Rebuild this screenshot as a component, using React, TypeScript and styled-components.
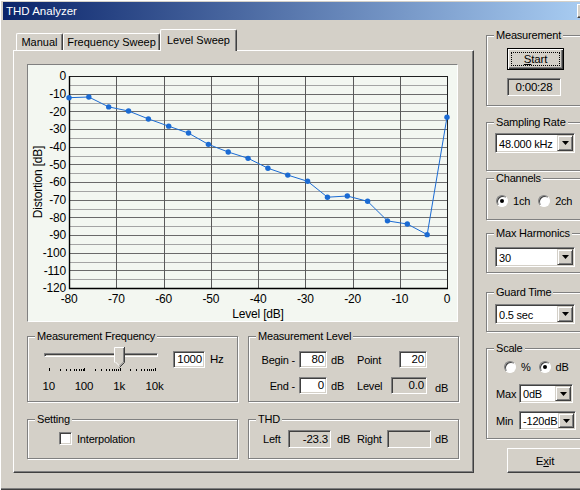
import React from "react";
import styled, { createGlobalStyle, css } from "styled-components";

interface SweepPoint {
    level: number;
    thd: number;
}

// measured sweep, -80 dB .. 0 dB in 20 steps
const sweep: SweepPoint[] = [
    { level: -80, thd: -12.3 },
    { level: -75.8, thd: -11.9 },
    { level: -71.6, thd: -17.5 },
    { level: -67.4, thd: -19.8 },
    { level: -63.2, thd: -24.3 },
    { level: -58.9, thd: -28.4 },
    { level: -54.7, thd: -32.3 },
    { level: -50.5, thd: -38.7 },
    { level: -46.3, thd: -43.0 },
    { level: -42.1, thd: -46.6 },
    { level: -37.9, thd: -52.2 },
    { level: -33.7, thd: -56.1 },
    { level: -29.5, thd: -59.6 },
    { level: -25.3, thd: -68.6 },
    { level: -21.1, thd: -67.9 },
    { level: -16.8, thd: -70.9 },
    { level: -12.6, thd: -82.0 },
    { level: -8.4, thd: -83.8 },
    { level: -4.2, thd: -89.8 },
    { level: 0, thd: -23.3 },
];

const CHART_W = 429;
const CHART_H = 256;
const PL = 41;
const PR = 419;
const PT = 11;
const PB = 223;

const xOf = (db: number) => PL + ((db + 80) * (PR - PL)) / 80;
const yOf = (db: number) => PT + (-db * (PB - PT)) / 120;

const LevelChart = () => {
    const hLines: number[] = [];
    for (let d = -5; d > -120; d -= 5) hLines.push(d);
    const vLines = [-70, -60, -50, -40, -30, -20, -10];
    const yLabels: number[] = [];
    for (let d = 0; d >= -120; d -= 10) yLabels.push(d);
    const xLabels = [-80, -70, -60, -50, -40, -30, -20, -10, 0];
    const path = sweep.map((p) => `${xOf(p.level).toFixed(1)},${yOf(p.thd).toFixed(1)}`).join(" ");

    return (
        <svg width={CHART_W} height={CHART_H} viewBox={`0 0 ${CHART_W} ${CHART_H}`}>
            {hLines.map((d) => (
                <line
                    key={"h" + d}
                    x1={PL}
                    x2={PR}
                    y1={Math.round(yOf(d)) + 0.5}
                    y2={Math.round(yOf(d)) + 0.5}
                    stroke={d % 10 === 0 ? "#6a6a6a" : "#a4a4a4"}
                    strokeWidth={1}
                />
            ))}
            {vLines.map((d) => (
                <line
                    key={"v" + d}
                    x1={Math.round(xOf(d)) + 0.5}
                    x2={Math.round(xOf(d)) + 0.5}
                    y1={PT}
                    y2={PB}
                    stroke="#5a5a5a"
                    strokeWidth={1}
                />
            ))}
            <rect x={PL + 0.5} y={PT + 0.5} width={PR - PL} height={PB - PT} fill="none" stroke="#202020" strokeWidth={1} />
            <line x1={PL + 0.5} x2={PL + 0.5} y1={PT} y2={PB + 1} stroke="#000" strokeWidth={1.4} />
            <line x1={PL} x2={PR + 1} y1={PB + 0.5} y2={PB + 0.5} stroke="#000" strokeWidth={1.4} />

            <polyline points={path} fill="none" stroke="#1b6bd3" strokeWidth={1} />
            {sweep.map((p) => (
                <circle key={p.level} cx={xOf(p.level)} cy={yOf(p.thd)} r={2.7} fill="#1b6bd3" />
            ))}

            <g fontFamily="'Liberation Sans', Arial, sans-serif" fontSize={12} fill="#000">
                {yLabels.map((d) => (
                    <text key={"yl" + d} x={PL - 3} y={yOf(d) + 4.3} textAnchor="end">
                        {d}
                    </text>
                ))}
                {xLabels.map((d) => (
                    <text key={"xl" + d} x={xOf(d)} y={237.5} textAnchor="middle">
                        {d}
                    </text>
                ))}
                <text x={(PL + PR) / 2} y={253} textAnchor="middle">
                    Level [dB]
                </text>
                <text transform={`translate(13.5 ${(PT + PB) / 2}) rotate(-90)`} textAnchor="middle">
                    Distortion [dB]
                </text>
            </g>
        </svg>
    );
};

const freqTicks: number[] = [];
for (let d = 10; d <= 1000; d *= 10) {
    for (let k = 1; k <= 9; k++) freqTicks.push(d * k);
}
freqTicks.push(10000);
const tickX = (f: number) => 18 + 35.3 * Math.log10(f / 10);

const FrequencySlider = () => (
    <SliderBlock>
        <SliderTrackArea>
            <Track />
            <Thumb>
                <svg width="11" height="21" viewBox="0 0 11 21">
                    <polygon points="0,0 10,0 10,15 5,20 0,15" fill="#d4d0c8" />
                    <polyline points="0.5,15.5 0.5,0.5 10,0.5" fill="none" stroke="#fff" />
                    <polyline points="1.5,15 5.5,19" fill="none" stroke="#fff" />
                    <polyline points="10.5,0 10.5,15.5 5.5,20.5" fill="none" stroke="#404040" />
                    <polyline points="9.5,1 9.5,15 5.5,19" fill="none" stroke="#808080" />
                </svg>
            </Thumb>
        </SliderTrackArea>
        <svg width="142" height="4" viewBox="0 0 142 4">
            {freqTicks.map((f) => (
                <line
                    key={f}
                    x1={Math.round(tickX(f)) + 0.5}
                    x2={Math.round(tickX(f)) + 0.5}
                    y1={f === 10 || f === 100 || f === 1000 || f === 10000 ? 0 : 1}
                    y2={3}
                    stroke="#000"
                />
            ))}
        </svg>
        <TickLabels>
            <span>10</span>
            <span>100</span>
            <span>1k</span>
            <span>10k</span>
        </TickLabels>
    </SliderBlock>
);

interface GroupBoxProps {
    title: string;
    height: number;
    top?: number;
    children?: React.ReactNode;
}

const GroupBox = ({ title, height, top, children }: GroupBoxProps) => (
    <Group $h={height} $mt={top ?? 0}>
        <Legend>{title}</Legend>
        {children}
    </Group>
);

interface ComboProps {
    value: string;
    width: number;
    height?: number;
}

const Combo = ({ value, width, height = 20 }: ComboProps) => (
    <ComboBox $w={width} $h={height}>
        <ComboText $h={height - 4}>{value}</ComboText>
        <DropButton>
            <svg width="7" height="4" viewBox="0 0 7 4">
                <path d="M0 0h7L3.5 4z" fill="#000" />
            </svg>
        </DropButton>
    </ComboBox>
);

const Radio = ({ label, checked, gap }: { label: string; checked?: boolean; gap: number }) => (
    <RadioItem $gap={gap}>
        <RadioCircle $checked={checked} />
        <span>{label}</span>
    </RadioItem>
);

const App = () => {
    return (
        <>
            <GlobalStyle />
            <Window>
                <TitleBar>
                    <TitleText>THD Analyzer</TitleText>
                    <CaptionButton />
                </TitleBar>
                <Content>
                    <LeftPane>
                        <TabRow>
                            <Tab $w={47}>Manual</Tab>
                            <Tab $w={97}>Frequency Sweep</Tab>
                            <Tab $w={77} $active>
                                Level Sweep
                            </Tab>
                        </TabRow>
                        <TabPanel>
                            <ChartBox>
                                <LevelChart />
                            </ChartBox>
                            <GroupGrid>
                                <GroupBox title="Measurement Frequency" height={66}>
                                    <FreqBody>
                                        <FrequencySlider />
                                        <TextField $w={32} $h={17} $mt={4}>
                                            1000
                                        </TextField>
                                        <Unit $mt={4}>Hz</Unit>
                                    </FreqBody>
                                </GroupBox>
                                <GroupBox title="Measurement Level" height={66}>
                                    <LevelGrid>
                                        <FieldLabel>Begin -</FieldLabel>
                                        <TextField $w={28} $h={17}>
                                            80
                                        </TextField>
                                        <span>dB</span>
                                        <span>Point</span>
                                        <TextField $w={28} $h={17} $right>
                                            20
                                        </TextField>
                                        <span />
                                        <FieldLabel>End -</FieldLabel>
                                        <TextField $w={28} $h={17}>
                                            0
                                        </TextField>
                                        <span>dB</span>
                                        <span>Level</span>
                                        <TextField $w={36} $h={17} $readOnly>
                                            0.0
                                        </TextField>
                                        <LowUnit>dB</LowUnit>
                                    </LevelGrid>
                                </GroupBox>
                                <GroupBox title="Setting" height={40}>
                                    <SettingBody>
                                        <CheckBox />
                                        <span>Interpolation</span>
                                    </SettingBody>
                                </GroupBox>
                                <GroupBox title="THD" height={40}>
                                    <ThdGrid>
                                        <span>Left</span>
                                        <TextField $w={43} $h={18} $readOnly>
                                            -23.3
                                        </TextField>
                                        <ThdUnit>dB</ThdUnit>
                                        <span>Right</span>
                                        <TextField $w={44} $h={18} $readOnly />
                                        <span>dB</span>
                                    </ThdGrid>
                                </GroupBox>
                            </GroupGrid>
                        </TabPanel>
                    </LeftPane>

                    <RightColumn>
                        <GroupBox title="Measurement" height={71} top={6}>
                            <MeasureBody>
                                <PushButton $w={57} $h={22} $default>
                                    <FocusRing>
                                        <u>S</u>tart
                                    </FocusRing>
                                </PushButton>
                                <TimerBox>0:00:28</TimerBox>
                            </MeasureBody>
                        </GroupBox>
                        <GroupBox title="Sampling Rate" height={49} top={16}>
                            <ComboBody $pt={10}>
                                <Combo value="48.000 kHz" width={80} />
                            </ComboBody>
                        </GroupBox>
                        <GroupBox title="Channels" height={42} top={7}>
                            <RadioRow $pt={16} $pl={9}>
                                <Radio label="1ch" checked gap={5} />
                                <Radio label="2ch" gap={5} />
                            </RadioRow>
                        </GroupBox>
                        <GroupBox title="Max Harmonics" height={40} top={13}>
                            <ComboBody $pt={13}>
                                <Combo value="30" width={80} />
                            </ComboBody>
                        </GroupBox>
                        <GroupBox title="Guard Time" height={40} top={19}>
                            <ComboBody $pt={11}>
                                <Combo value="0.5 sec" width={80} />
                            </ComboBody>
                        </GroupBox>
                        <GroupBox title="Scale" height={91} top={16}>
                            <RadioRow $pt={12} $pl={17}>
                                <Radio label="%" gap={5} />
                                <Radio label="dB" checked gap={5} />
                            </RadioRow>
                            <ScaleRow $mt={11}>
                                <ScaleLabel>Max</ScaleLabel>
                                <Combo value="0dB" width={54} height={19} />
                            </ScaleRow>
                            <ScaleRow $mt={8}>
                                <ScaleLabel>Min</ScaleLabel>
                                <Combo value="-120dB" width={57} height={19} />
                            </ScaleRow>
                        </GroupBox>
                        <ExitWrap>
                            <PushButton $w={76} $h={25}>
                                E<u>x</u>it
                            </PushButton>
                        </ExitWrap>
                    </RightColumn>
                </Content>
            </Window>
        </>
    );
};

const GlobalStyle = createGlobalStyle`
    html, body {
        margin: 0;
        padding: 0;
        background: #d4d0c8;
        overflow: hidden;
    }
    body {
        font-family: "Liberation Sans", Arial, sans-serif;
        font-size: 11px;
        letter-spacing: -0.2px;
        color: #000;
    }
    u {
        text-underline-offset: 1px;
    }
`;

const raised = css`
    border: 1px solid;
    border-color: #fff #404040 #404040 #fff;
    box-shadow: inset -1px -1px #808080;
`;

const sunken = css`
    border: 1px solid;
    border-color: #808080 #fff #fff #808080;
    box-shadow: inset 1px 1px #404040, inset -1px -1px #d4d0c8;
`;

const Window = styled.div`
    box-sizing: border-box;
    width: 596px;
    height: 490px;
    padding: 2px 0 0 3px;
    background: #d4d0c8;
    box-shadow: inset 1px 1px #fff, inset 0 -1px #404040, inset 0 -2px #808080;
    overflow: hidden;
`;

const TitleBar = styled.div`
    display: flex;
    align-items: center;
    height: 18px;
    padding-right: 3px;
    background: linear-gradient(to right, #0a246a 0, #a6caf0 573px);
`;

const TitleText = styled.span`
    padding-left: 3px;
    color: #fff;
    font-size: 11.5px;
    letter-spacing: 0;
`;

const CaptionButton = styled.div`
    box-sizing: border-box;
    margin-left: auto;
    width: 16px;
    height: 14px;
    background: #d4d0c8;
    ${raised};
`;

const Content = styled.div`
    display: flex;
    align-items: flex-start;
    padding: 9px 0 0 10px;
`;

const LeftPane = styled.div`
    width: 461px;
    display: flex;
    flex-direction: column;
`;

const TabRow = styled.div`
    display: flex;
    align-items: flex-end;
    height: 21px;
    padding-left: 3px;
`;

const Tab = styled.div<{ $w: number; $active?: boolean }>`
    box-sizing: border-box;
    width: ${(p) => p.$w}px;
    height: ${(p) => (p.$active ? 22 : 17)}px;
    margin-bottom: ${(p) => (p.$active ? -1 : 0)}px;
    position: relative;
    z-index: ${(p) => (p.$active ? 1 : 0)};
    display: flex;
    align-items: center;
    justify-content: center;
    padding-bottom: ${(p) => (p.$active ? 1 : 0)}px;
    background: #d4d0c8;
    border-top: 1px solid #fff;
    border-left: 1px solid #fff;
    border-right: 1px solid #404040;
    border-radius: 2px 2px 0 0;
    box-shadow: inset -1px 0 #808080;
    white-space: nowrap;
    letter-spacing: 0;
`;

const TabPanel = styled.div`
    box-sizing: border-box;
    height: 423px;
    padding: 13px 0 0 13px;
    border: 1px solid;
    border-color: #fff #404040 #404040 #fff;
    box-shadow: inset -1px -1px #808080;
    display: flex;
    flex-direction: column;
    gap: 14px;
`;

const ChartBox = styled.div`
    box-sizing: border-box;
    width: 431px;
    height: 258px;
    border: 1px solid;
    border-color: #808080 #fff #fff #808080;
    background: #f3f7f1;
    svg {
        display: block;
    }
`;

const GroupGrid = styled.div`
    display: grid;
    grid-template-columns: 211px 211px;
    grid-template-rows: 66px 40px;
    column-gap: 10px;
    row-gap: 17px;
`;

const Group = styled.div<{ $h: number; $mt: number }>`
    box-sizing: border-box;
    position: relative;
    height: ${(p) => p.$h}px;
    margin-top: ${(p) => p.$mt}px;
    border: 1px solid #808080;
    box-shadow: inset 1px 1px #fff, 1px 1px #fff;
`;

const Legend = styled.span`
    position: absolute;
    top: -7px;
    left: 7px;
    padding: 0 2px;
    line-height: 13px;
    background: #d4d0c8;
    white-space: nowrap;
`;

const FreqBody = styled.div`
    display: flex;
    align-items: flex-start;
    padding: 10px 0 0 3px;
`;

const SliderBlock = styled.div`
    width: 142px;
    display: flex;
    flex-direction: column;
    svg {
        display: block;
    }
`;

const SliderTrackArea = styled.div`
    position: relative;
    height: 21px;
`;

const Track = styled.div`
    box-sizing: border-box;
    margin: 6px 0 0 13px;
    width: 114px;
    height: 4px;
    border: 1px solid;
    border-color: #808080 #fff #fff #808080;
    box-shadow: inset 1px 1px #404040;
`;

const Thumb = styled.div`
    position: absolute;
    left: 83px;
    top: 0;
`;

const TickLabels = styled.div`
    display: grid;
    grid-template-columns: repeat(4, 35.3px);
    margin-top: 8px;
    line-height: 13px;
    font-size: 11.5px;
    span {
        text-align: center;
    }
`;

const TextField = styled.div<{ $w: number; $h: number; $mt?: number; $readOnly?: boolean; $right?: boolean }>`
    box-sizing: border-box;
    width: ${(p) => p.$w}px;
    height: ${(p) => p.$h}px;
    margin-top: ${(p) => p.$mt ?? 0}px;
    justify-self: ${(p) => (p.$right ? "end" : "start")};
    padding: 0 2px;
    background: ${(p) => (p.$readOnly ? "#d4d0c8" : "#fff")};
    ${sunken};
    text-align: right;
    line-height: ${(p) => p.$h - 2}px;
    font-size: 11.5px;
`;

const Unit = styled.span<{ $mt: number }>`
    margin: ${(p) => p.$mt}px 0 0 5px;
    line-height: 17px;
    font-size: 11.5px;
`;

const LevelGrid = styled.div`
    display: grid;
    grid-template-columns: 46px 28px 22px 30px 36px auto;
    grid-auto-rows: 17px;
    column-gap: 4px;
    row-gap: 9px;
    align-items: center;
    padding-top: 14px;
`;

const FieldLabel = styled.span`
    text-align: right;
`;

const LowUnit = styled.span`
    margin-left: 4px;
    padding-top: 5px;
`;

const SettingBody = styled.div`
    display: flex;
    align-items: center;
    gap: 5px;
    padding: 12px 0 0 31px;
`;

const CheckBox = styled.span`
    box-sizing: border-box;
    width: 13px;
    height: 13px;
    background: #fff;
    ${sunken};
`;

const ThdGrid = styled.div`
    display: grid;
    grid-template-columns: 25px 43px 26px 30px 44px auto;
    align-items: center;
    padding: 10px 0 0 14px;
    & > span:last-child {
        padding-left: 4px;
    }
`;

const ThdUnit = styled.span`
    padding-left: 6px;
`;

const RightColumn = styled.div`
    width: 96px;
    margin-left: 12px;
    display: flex;
    flex-direction: column;
`;

const MeasureBody = styled.div`
    display: flex;
    flex-direction: column;
    gap: 8px;
    padding: 12px 0 0 20px;
`;

const PushButton = styled.div<{ $w: number; $h: number; $default?: boolean }>`
    box-sizing: border-box;
    width: ${(p) => p.$w}px;
    height: ${(p) => p.$h}px;
    display: flex;
    align-items: center;
    justify-content: center;
    background: #d4d0c8;
    font-size: 11.5px;
    ${raised};
    ${(p) =>
        p.$default &&
        css`
            border-color: #000;
            box-shadow: inset 1px 1px #fff, inset -1px -1px #404040, inset -2px -2px #808080;
        `};
`;

const FocusRing = styled.span`
    flex: 1;
    align-self: stretch;
    margin: 3px;
    border: 1px dotted #000;
    display: flex;
    align-items: center;
    justify-content: center;
`;

const TimerBox = styled.div`
    box-sizing: border-box;
    width: 54px;
    height: 18px;
    ${sunken};
    text-align: center;
    line-height: 16px;
    font-size: 11.5px;
`;

const ComboBody = styled.div<{ $pt: number }>`
    padding: ${(p) => p.$pt}px 0 0 8px;
`;

const ComboBox = styled.div<{ $w: number; $h: number }>`
    box-sizing: border-box;
    width: ${(p) => p.$w}px;
    height: ${(p) => p.$h}px;
    display: flex;
    padding: 1px;
    background: #fff;
    ${sunken};
`;

const ComboText = styled.span<{ $h: number }>`
    flex: 1;
    padding-left: 2px;
    line-height: ${(p) => p.$h + 2}px;
    white-space: nowrap;
    overflow: hidden;
`;

const DropButton = styled.span`
    box-sizing: border-box;
    flex: none;
    width: 16px;
    display: flex;
    align-items: center;
    justify-content: center;
    background: #d4d0c8;
    border: 1px solid;
    border-color: #d4d0c8 #404040 #404040 #d4d0c8;
    box-shadow: inset 1px 1px #fff, inset -1px -1px #808080;
`;

const RadioRow = styled.div<{ $pt: number; $pl: number }>`
    display: flex;
    align-items: center;
    gap: 8px;
    padding: ${(p) => p.$pt}px 0 0 ${(p) => p.$pl}px;
    line-height: 12px;
`;

const RadioItem = styled.span<{ $gap: number }>`
    display: flex;
    align-items: center;
    gap: ${(p) => p.$gap}px;
`;

const RadioCircle = styled.span<{ $checked?: boolean }>`
    box-sizing: border-box;
    width: 12px;
    height: 12px;
    border-radius: 50%;
    background: #fff;
    border: 1px solid;
    border-color: #808080 #fff #fff #808080;
    box-shadow: inset 1px 1px #404040;
    display: flex;
    align-items: center;
    justify-content: center;
    &::after {
        content: "";
        width: 4px;
        height: 4px;
        border-radius: 50%;
        background: #000;
        display: ${(p) => (p.$checked ? "block" : "none")};
    }
`;

const ScaleRow = styled.div<{ $mt: number }>`
    display: flex;
    align-items: center;
    margin-top: ${(p) => p.$mt}px;
    padding-left: 9px;
`;

const ScaleLabel = styled.span`
    width: 23px;
`;

const ExitWrap = styled.div`
    margin: 9px 0 0 21px;
`;

export default App;
